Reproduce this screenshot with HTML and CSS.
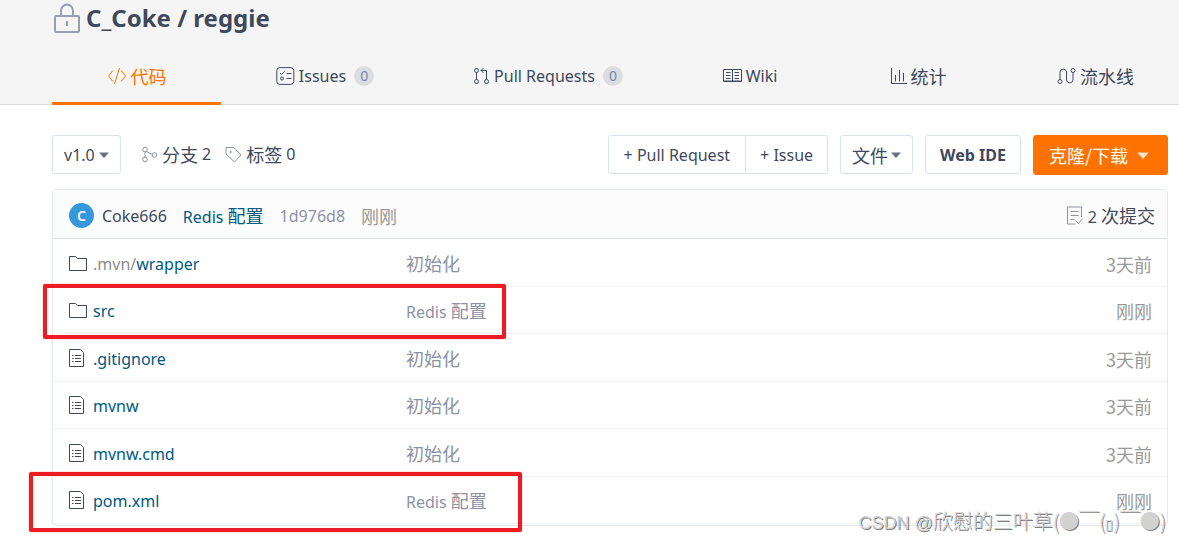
FILE: index.html
```html
<!DOCTYPE html>
<html lang="zh-CN">
<head>
<meta charset="UTF-8">
<meta name="viewport" content="width=device-width, initial-scale=1.0">
<title>C_Coke / reggie</title>
<link rel="stylesheet" href="styles.css">
</head>
<body>

<svg class="sprite" width="0" height="0">
  <symbol id="folder" viewBox="0 0 18 16">
    <path d="M.5 14.5V.5h6l2 2h9v12z"/>
  </symbol>
  <symbol id="file" viewBox="0 0 16 18" preserveAspectRatio="xMinYMid">
    <path d="M.5 .5h11l3 3v14H.5zM6 6.500h6M6 9.500h6M6 12.500h6M3 6.500h1.500M3 9.500h1.500M3 12.500h1.500"/>
  </symbol>
  <symbol id="caret" viewBox="0 0 10 6">
    <path d="M0 .5h10L5 6z" fill="currentColor" stroke="none"/>
  </symbol>
</svg>

<header class="header">
  <h1 class="title">
    <svg class="icon lock" width="26" height="30" viewBox="0 0 26 30">
      <rect x="1" y="13" width="24" height="16" rx="1"/>
      <path d="M7 13V8a6 6.500 0 0 1 12 0v5M13 18v5"/>
    </svg>
    <a href="#">C_Coke / reggie</a>
  </h1>
  <nav class="tabs">
    <a class="tab active" href="#">
      <svg class="icon" width="20" height="18" viewBox="0 0 20 18"><path d="M6 3.500L1.500 9 6 14.500M14 3.500L18.500 9 14 14.500M12.500 1L7.500 17"/></svg>
      <span class="zh">代码</span>
    </a>
    <a class="tab" href="#">
      <svg class="icon" width="19" height="18" viewBox="0 0 19 18"><rect x=".8" y=".6" width="17" height="16.800" rx="3"/><path d="M4 6l1.500 1.500L8.500 4.500M10.500 6.500h5M10.500 11.500h5"/><circle cx="6" cy="11.500" r="1.500"/></svg>
      <span>Issues</span>
      <span class="badge">0</span>
    </a>
    <a class="tab" href="#">
      <svg class="icon" width="17" height="18" viewBox="0 0 17 18"><circle cx="3.500" cy="3.500" r="2"/><circle cx="3.500" cy="14.500" r="2"/><circle cx="13.500" cy="14.500" r="2"/><path d="M3.500 5.500v7M13.500 12.500V3.500H8M10.500 1L8 3.500 10.500 6"/></svg>
      <span>Pull Requests</span>
      <span class="badge">0</span>
    </a>
    <a class="tab" href="#">
      <svg class="icon" width="19" height="18" viewBox="0 0 19 18"><path d="M.5 2.500h18v12H.5zM9.500 2.500v12M1 14h17M3 5.500h4.500M3 8.500h4.500M3 11.500h4.500M11.500 5.500H16M11.500 8.500H16M11.500 11.500H16"/></svg>
      <span>Wiki</span>
    </a>
    <a class="tab" href="#">
      <svg class="icon" width="17" height="18" viewBox="0 0 17 18"><path d="M1.500 1v15.500H17M5.500 8v6.500M9.500 3v11.500M13.500 6v8.500"/></svg>
      <span class="zh">统计</span>
    </a>
    <a class="tab" href="#">
      <svg class="icon" width="19" height="18" viewBox="0 0 19 18"><circle cx="3" cy="14.500" r="2"/><circle cx="16" cy="3.500" r="2"/><path d="M3 12.500V5a3.300 3.500 0 0 1 6.500 0v8a3.300 3.500 0 0 0 6.500 0V5.500"/></svg>
      <span class="zh">流水线</span>
    </a>
  </nav>
</header>

<main class="content">
  <div class="toolbar">
    <div class="branch">
      <select aria-label="分支">
        <option>v1.0</option>
      </select>
      <svg class="caret" width="10" height="6"><use href="#caret"/></svg>
    </div>
    <div class="refs">
      <a href="#">
        <svg class="icon" width="17" height="17" viewBox="0 0 17 17"><circle cx="4" cy="3.500" r="2.300"/><circle cx="4" cy="13.500" r="2.300"/><circle cx="13.500" cy="9" r="2.300"/><path d="M4 6v5M5.500 5.500L11.500 8.500"/></svg>
        <span class="zh">分支</span> 2
      </a>
      <a href="#">
        <svg class="icon" width="17" height="17" viewBox="0 0 17 17"><path d="M1 1.500h8L16 9l-6.500 7L1 8z"/><circle cx="5.500" cy="6" r=".8"/></svg>
        <span class="zh">标签</span> 0
      </a>
    </div>
    <div class="actions">
      <div class="group">
        <button type="button">+ Pull Request</button><button type="button">+ Issue</button>
      </div>
      <button type="button" class="btn-file"><span class="zh">文件</span><svg class="caret" width="10" height="6"><use href="#caret"/></svg></button>
      <button type="button" class="btn-ide">Web IDE</button>
      <button type="button" class="btn-clone"><span class="zh">克隆/下载</span><svg class="caret" width="12" height="7"><use href="#caret"/></svg></button>
    </div>
  </div>

  <div class="files">
    <div class="commit">
      <span class="avatar">C</span>
      <a class="author" href="#">Coke666</a>
      <a class="message" href="#">Redis <span class="zh">配置</span></a>
      <a class="sha" href="#">1d976d8</a>
      <span class="ago zh">刚刚</span>
      <a class="count" href="#">
        <svg class="icon" width="17" height="19" viewBox="0 0 17 19"><path d="M15.500 11V1H1.500v17h8M4.500 5.500h8M4.500 9.500h8M4.500 13.500h4M9.500 14.500l3 3 4-5"/></svg>
        <span>2 <span class="zh">次提交</span></span>
      </a>
    </div>
    <table>
      <tr>
        <td class="name"><svg class="icon" width="18" height="16"><use href="#folder"/></svg><a href="#"><span class="parent">.mvn/</span>wrapper</a></td>
        <td class="log"><a href="#" class="zh">初始化</a></td>
        <td class="time zh">3天前</td>
      </tr>
      <tr>
        <td class="name"><svg class="icon" width="18" height="16"><use href="#folder"/></svg><a href="#">src</a></td>
        <td class="log"><a href="#">Redis <span class="zh">配置</span></a></td>
        <td class="time zh">刚刚</td>
      </tr>
      <tr>
        <td class="name"><svg class="icon" width="18" height="18"><use href="#file"/></svg><a href="#">.gitignore</a></td>
        <td class="log"><a href="#" class="zh">初始化</a></td>
        <td class="time zh">3天前</td>
      </tr>
      <tr>
        <td class="name"><svg class="icon" width="18" height="18"><use href="#file"/></svg><a href="#">mvnw</a></td>
        <td class="log"><a href="#" class="zh">初始化</a></td>
        <td class="time zh">3天前</td>
      </tr>
      <tr>
        <td class="name"><svg class="icon" width="18" height="18"><use href="#file"/></svg><a href="#">mvnw.cmd</a></td>
        <td class="log"><a href="#" class="zh">初始化</a></td>
        <td class="time zh">3天前</td>
      </tr>
      <tr>
        <td class="name"><svg class="icon" width="18" height="18"><use href="#file"/></svg><a href="#">pom.xml</a></td>
        <td class="log"><a href="#">Redis <span class="zh">配置</span></a></td>
        <td class="time zh">刚刚</td>
      </tr>
    </table>
    <div class="mark mark-src"></div>
    <div class="mark mark-pom"></div>
    <div class="watermark"><span class="site">CSDN @</span>欣慰的三叶草(●￣(<span class="box">▯</span>)￣●)</div>
  </div>
</main>

</body>
</html>
```

FILE: styles.css
```css
* {
  box-sizing: border-box;
}

body {
  margin: 0;
  background: #fff;
  color: #40485b;
  font-family: "Noto Sans", "Noto Sans CJK SC", sans-serif;
  font-size: 16px;
  line-height: 24px;
}

a {
  color: inherit;
  text-decoration: none;
}

.zh {
  font-family: "Noto Sans CJK SC", sans-serif;
  font-size: 18px;
  font-weight: 400;
}

.sprite {
  position: absolute;
}

.icon,
.sprite {
  fill: none;
  stroke: currentColor;
  flex: none;
}

.caret {
  color: #6b7080;
  flex: none;
}

/* header */
.header {
  background: #f5f5f5;
  border-bottom: 1px solid #dcddde;
  padding: 2px 11px 0 52px;
}

.title {
  display: flex;
  align-items: center;
  gap: 6px;
  height: 32px;
  margin: 0 0 15px;
  padding-left: 2px;
  font-size: 24px;
  font-weight: 700;
}

.lock {
  color: #9a9fae;
  stroke-width: 2;
}

.tabs {
  display: grid;
  grid-template-columns: 169fr 208fr 238fr 166fr 170fr 165fr;
  margin-bottom: -1px;
}

.tab {
  display: flex;
  align-items: center;
  justify-content: center;
  gap: 4px;
  height: 56px;
  border-bottom: 3px solid transparent;
  white-space: nowrap;
}

.tab:last-child {
  justify-content: flex-start;
  padding-left: 54px;
}

.tab.active {
  color: #fe7300;
  border-color: #fe7300;
}

.badge {
  margin-left: 4px;
  padding: 0 6px;
  border-radius: 10px;
  background: #dcddde;
  color: #7485ae;
  font-size: 14px;
  line-height: 20px;
}

/* toolbar */
.content {
  padding: 30px 11px 15px 52px;
}

.toolbar {
  display: flex;
  align-items: flex-start;
  height: 40px;
  margin-bottom: 14px;
}

.branch {
  position: relative;
}

.branch .caret {
  position: absolute;
  right: 12px;
  top: 17px;
  pointer-events: none;
}

select,
button {
  height: 39px;
  margin: 0;
  padding: 0 11px;
  border: 1px solid #dce3e8;
  border-radius: 3px;
  background: #fff;
  color: #40485b;
  font: inherit;
}

select {
  appearance: none;
  width: 69px;
}

.refs {
  display: flex;
  gap: 14px;
  margin-left: 20px;
  line-height: 39px;
}

.refs a {
  display: flex;
  align-items: center;
  gap: 4px;
}

.refs .icon {
  color: #8c92a4;
}

.actions {
  display: flex;
  gap: 12px;
  margin-left: auto;
}

.actions button {
  display: flex;
  align-items: center;
  justify-content: center;
}

.group {
  display: flex;
}

.group button {
  padding: 0 14px;
}

.group button:first-child {
  padding: 0 15px;
  border-radius: 3px 0 0 3px;
}

.group button:last-child {
  margin-left: -1px;
  border-radius: 0 3px 3px 0;
}

.btn-file {
  gap: 3px;
}

.actions .btn-ide {
  padding: 0 14px;
  font-weight: 700;
}

.actions .btn-clone {
  gap: 9px;
  height: 40px;
  padding: 0 18px 0 15px;
  border-color: #fe7300;
  background: #fe7300;
  color: #fff;
}

.btn-clone .caret {
  color: #ffe0c8;
}

/* file list */
.files {
  position: relative;
  padding-bottom: 1px;
  border: 1px solid #e3e9ed;
  border-radius: 4px;
}

.commit {
  display: flex;
  align-items: center;
  height: 49px;
  padding: 3px 12px 0 16px;
  border-bottom: 1px solid #dce3e8;
  border-radius: 4px 4px 0 0;
  background: #fcfcfc;
}

.avatar {
  width: 25px;
  margin-right: 8px;
  border-radius: 50%;
  background: #3498db;
  color: #fff;
  font-size: 14px;
  font-weight: 600;
  line-height: 25px;
  text-align: center;
}

.message,
.sha,
.ago {
  margin-left: 16px;
}

.message {
  color: #005980;
}

.sha {
  color: #8c92a4;
}

.ago {
  color: #999;
}

.count {
  display: flex;
  align-items: center;
  gap: 5px;
  margin-left: auto;
}

.count .icon {
  color: #8c92a4;
}

table {
  width: 100%;
  border-spacing: 0;
  table-layout: fixed;
}

td {
  height: 47px;
  padding: 2px 0 0;
  border-bottom: 1px solid #eff3f6;
}

tr:nth-child(odd) td {
  height: 48px;
}

.name {
  width: 353px;
  padding-left: 16px;
  color: #005980;
}

.name .icon {
  display: inline-block;
  margin-right: 6px;
  color: #40485b;
  vertical-align: -2px;
}

.parent {
  color: #8c8c8c;
}

.log {
  color: #8c92a4;
}

.time {
  width: 200px;
  padding-right: 15px;
  color: #999;
  text-align: right;
}

/* red frames over the rows */
.mark {
  position: absolute;
  border: 4px solid #ed1c24;
  border-radius: 2px;
  box-shadow: 0 0 1px #ed1c24;
  pointer-events: none;
}

.mark-src {
  left: -10px;
  top: 94px;
  width: 463px;
  height: 55px;
}

.mark-pom {
  left: -24px;
  top: 282px;
  width: 493px;
  height: 60px;
}

.watermark {
  position: absolute;
  right: 1px;
  bottom: -10px;
  color: #d2d2d2;
  font-family: "Noto Sans CJK SC", sans-serif;
  font-size: 20px;
  font-weight: 300;
  text-shadow: 1px 1px 0 #808080;
  white-space: nowrap;
}

.watermark .site {
  font-family: "Liberation Sans", sans-serif;
  font-size: 18px;
}

.watermark .box {
  font-size: 14px;
}
```
